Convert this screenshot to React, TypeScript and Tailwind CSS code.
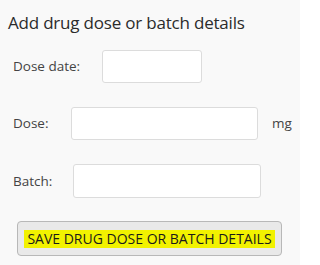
import React from "react";

export default function App() {
  return (
    <div
      className="w-[300px] h-[265px] bg-[#f9f9f9] text-[#333333] overflow-hidden"
      style={{ fontFamily: '"Open Sans", "Noto Sans", sans-serif' }}
    >
      <div className="pl-[8px] pt-[12px]">
        <h1 className="text-[17px] leading-[22px] text-[#2b2b2b] tracking-[-0.2px]">
          Add drug dose or batch details
        </h1>
      </div>
      <div className="pl-[13px] mt-[16px] flex items-center gap-[22px] h-[33px]">
        <span className="text-[13.5px] text-[#444444]">Dose date:</span>
        <div className="w-[100px] h-[33px] bg-white border border-[#dcdcdc] rounded-[3px]" />
      </div>
      <div className="pl-[13px] mt-[24px] flex items-center h-[33px]">
        <span className="text-[13.5px] text-[#444444] w-[58px]">Dose:</span>
        <div className="w-[187px] h-[33px] bg-white border border-[#dcdcdc] rounded-[3px]" />
        <span className="text-[13.5px] text-[#444444] ml-[14px]">mg</span>
      </div>
      <div className="pl-[13px] mt-[24px] flex items-center h-[34px]">
        <span className="text-[13.5px] text-[#444444] w-[60px]">Batch:</span>
        <div className="w-[188px] h-[34px] bg-white border border-[#dcdcdc] rounded-[3px]" />
      </div>
      <div className="pl-[17px] mt-[23px]">
        <button className="w-[265px] h-[35px] bg-[#e9e9e9] border border-[#b8b8b8] rounded-[4px] flex items-center justify-center">
          <span className="bg-[#f2f200] text-[#1a1a1a] text-[14px] leading-[18px] px-[3px] tracking-[0px]">
            SAVE DRUG DOSE OR BATCH DETAILS
          </span>
        </button>
      </div>
    </div>
  );
}
